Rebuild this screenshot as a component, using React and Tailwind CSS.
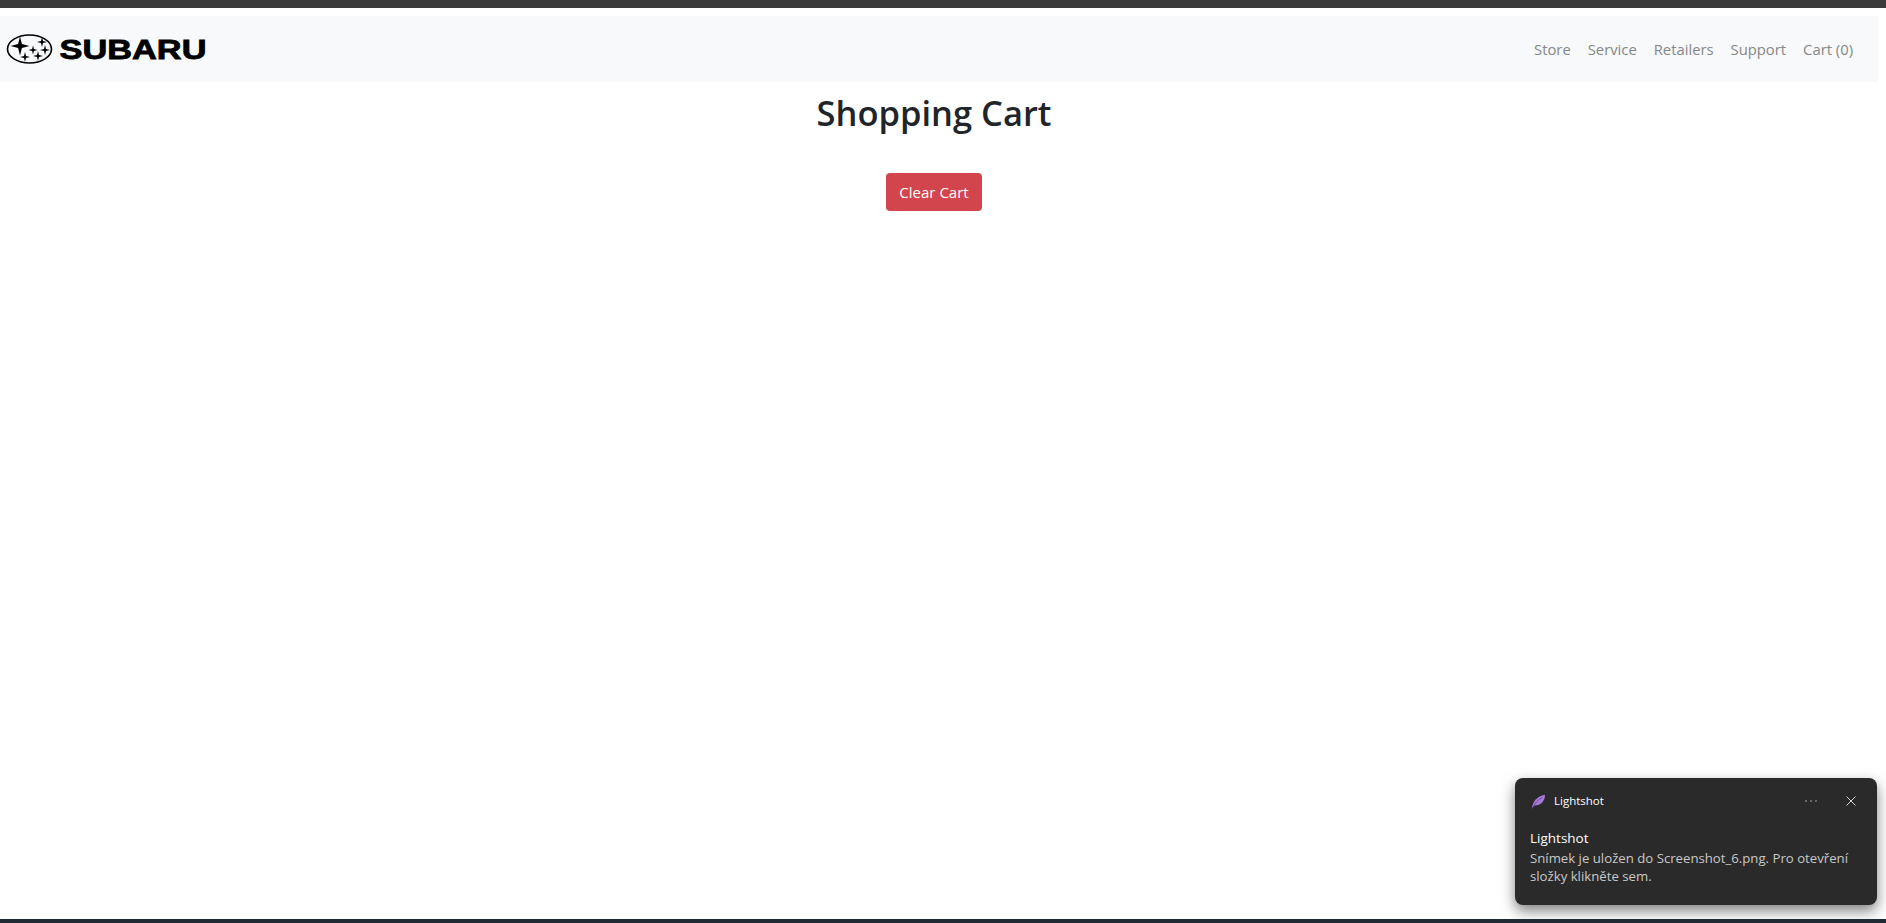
import React from "react";

const sans = '"Open Sans", "Noto Sans", sans-serif';

function Star({ cx, cy, r }) {
  const p = r * 0.2;
  const d = `M${cx} ${cy - r}L${cx + p} ${cy - p}L${cx + r} ${cy}L${cx + p} ${cy + p}L${cx} ${cy + r}L${cx - p} ${cy + p}L${cx - r} ${cy}L${cx - p} ${cy - p}Z`;
  return <path d={d} fill="#000" />;
}

function Logo() {
  return (
    <div className="flex items-center">
      <svg width="48" height="32" viewBox="0 0 48 32" className="block">
        <ellipse cx="23.5" cy="16" rx="22" ry="14" fill="none" stroke="#000" strokeWidth="1.6" />
        <Star cx={14} cy={13} r={9.5} />
        <Star cx={36} cy={9} r={5} />
        <Star cx={27} cy={17} r={4.5} />
        <Star cx={39} cy={17} r={5} />
        <Star cx={32} cy={23} r={5} />
        <Star cx={19} cy={24} r={5} />
      </svg>
      <svg width="152" height="32" viewBox="0 0 152 32" className="block ml-[5px] overflow-visible">
        <text
          x="0.5"
          y="26"
          textLength="147"
          lengthAdjust="spacingAndGlyphs"
          fontFamily='"Liberation Sans", sans-serif'
          fontWeight="700"
          fontSize="27"
          stroke="#000"
          strokeWidth="0.8"
          fill="#000"
        >
          SUBARU
        </text>
      </svg>
    </div>
  );
}

export default function App() {
  return (
    <div className="relative h-[923px] w-full overflow-hidden bg-white" style={{ fontFamily: sans }}>
      <div className="h-2 bg-[#3b3b3b]" />
      <nav className="mt-2 flex h-[66px] w-[1878px] items-center justify-between bg-[#f8f9fa] pl-[6px] pr-[25px]">
        <Logo />
        <ul className="flex gap-[17px] pt-[1px] text-[14.8px] text-[#858789]">
          <li>Store</li>
          <li>Service</li>
          <li>Retailers</li>
          <li>Support</li>
          <li>Cart (0)</li>
        </ul>
      </nav>
      <main className="flex w-[1868px] flex-col items-center text-center">
        <h1 className="mt-[9px] text-[34.5px] font-semibold leading-[44px] text-[#212529]">Shopping Cart</h1>
        <button className="mt-[38px] h-[38px] w-[96px] rounded-[4px] bg-[#d2454c] text-[15px] text-white">Clear Cart</button>
      </main>
      <div className="absolute left-[1515px] top-[778px] h-[127px] w-[362px] rounded-[8px] bg-[#2a2a2a] pl-[15px] pr-[16px] text-white shadow-[0_6px_14px_rgba(0,0,0,0.5)]">
        <div className="flex h-[46px] items-center">
          <svg width="15" height="15" viewBox="0 0 15 15" className="ml-[1px]">
            <path d="M1 14.5C1.5 8 6 2 14 .8C14 7 10 11.5 3.5 11.5Z" fill="#a678d8" />
            <path d="M1 14.5C4 9 7 6 11 3.5" stroke="#5f3d8c" strokeWidth=".7" fill="none" />
          </svg>
          <span className="ml-[8px] text-[11.5px]">Lightshot</span>
          <svg width="14" height="4" viewBox="0 0 14 4" className="ml-auto mr-[27px]">
            <circle cx="2" cy="2" r=".8" fill="#b5b5b5" />
            <circle cx="7" cy="2" r=".8" fill="#b5b5b5" />
            <circle cx="12" cy="2" r=".8" fill="#b5b5b5" />
          </svg>
          <svg width="12" height="12" viewBox="0 0 12 12" className="mr-[4px]">
            <path d="M1.5 1.5L10.5 10.5M10.5 1.5L1.5 10.5" stroke="#d5d5d5" strokeWidth="1" />
          </svg>
        </div>
        <div className="mt-[5px] text-[13.5px] leading-[18px]">Lightshot</div>
        <div className="mt-[2px] text-[13.2px] leading-[18px] text-[#c8c8c8]">
          Snímek je uložen do Screenshot_6.png. Pro otevření
          <br />
          složky klikněte sem.
        </div>
      </div>
      <div className="absolute bottom-0 left-0 right-0 h-1 bg-[#1f2a35]" />
    </div>
  );
}
